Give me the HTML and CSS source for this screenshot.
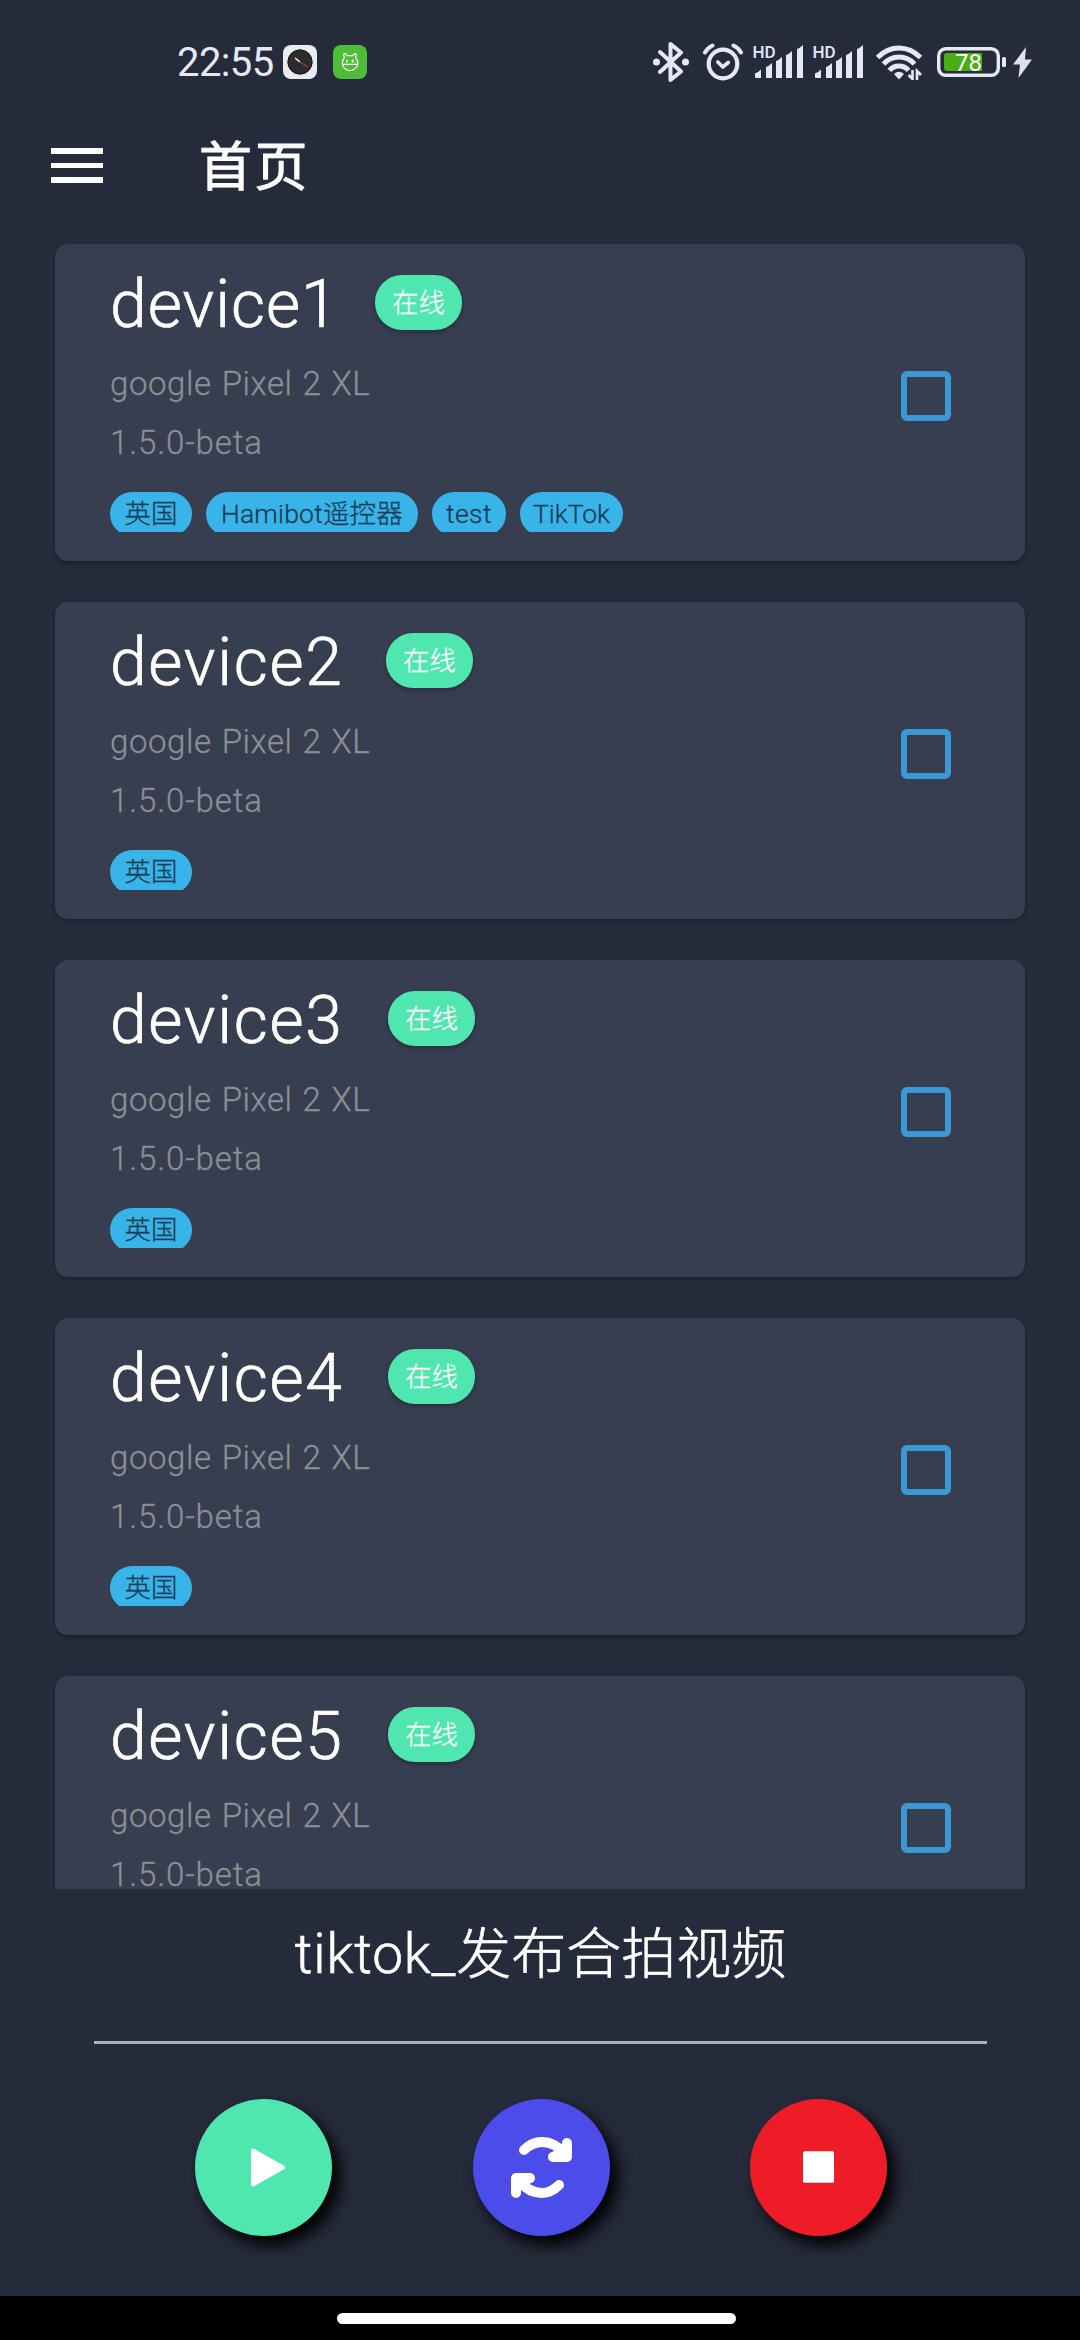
FILE: index.html
```html
<!DOCTYPE html>
<html lang="zh">
<head>
<meta charset="utf-8">
<title>首页</title>
<link rel="stylesheet" href="styles.css">
</head>
<body>
<div class="screen">
  <div class="status">
    <span class="time">22:55</span>
    <svg class="app-icon" width="34" height="34" viewBox="0 0 34 34"><rect width="34" height="34" rx="8" fill="#e9edf0"/><circle cx="17" cy="17" r="12.200" fill="#2b2b2d" stroke="#151515" stroke-width="1"/><path d="M12 13l5 4" stroke="#fff" stroke-width="1.600"/><path d="M17 17l8 5" stroke="#a33c4c" stroke-width="1.200"/></svg>
    <svg class="app-icon" width="34" height="34" viewBox="0 0 34 34"><rect width="34" height="34" rx="8" fill="#4fbd39"/><g fill="none" stroke="#fff" stroke-width="1.200"><path d="M11.500 12.300c-1.500-2-.8-3.600.5-3.600s1.600.8 2 1.900h6c.4-1.100.7-1.900 2-1.900s2 1.600.5 3.600c1.500 1.700 2.200 3.600 2.200 5.700a7.700 7.700 0 0 1-15.400 0c0-2.100.7-4 2.200-5.700z"/><path d="M9.300 19.400h15.400M14 14.500v3M18.200 16h3M19.700 14.500v3"/></g></svg>
    <div class="indicators">
      <svg width="36" height="40" viewBox="0 0 36 40"><path d="M7 10l21 19.500-10.500 8.500V2L28 10.500 7 30" fill="none" stroke="#e6e9f1" stroke-width="4" stroke-linejoin="round" stroke-linecap="round"/><circle cx="3.500" cy="20" r="3.500" fill="#e6e9f1"/><circle cx="32.500" cy="20" r="3.500" fill="#e6e9f1"/></svg>
      <svg class="alarm" width="40" height="38" viewBox="0 0 40 38"><g fill="none" stroke="#e6e9f1" stroke-linecap="round" stroke-linejoin="round"><circle cx="20" cy="21" r="14.300" stroke-width="4.200"/><path d="M14.800 19l5 5 5.500-4.500" stroke-width="3.600"/><path d="M2 9.500Q4.500 5 9.500 2.500M30.500 2.500Q35.500 5 38 9.500" stroke-width="4"/></g></svg>
      <svg class="signal" width="52" height="34" viewBox="0 0 52 34"><text x="-.5" y="13" class="hd">HD</text><g fill="#e6e9f1"><path d="M2 32.500v-4q3-1 6-4v8.500H3zM13 33V22q3-1 6-4v15zM23 33V16q3-1 6-4v21zM33 33V10q3-1 6-4v27zM44 33V4q3-1 6-4v33z"/></g></svg>
      <svg class="signal" width="52" height="34" viewBox="0 0 52 34"><text x="-.5" y="13" class="hd">HD</text><g fill="#e6e9f1"><path d="M2 32.500v-4q3-1 6-4v8.500H3zM13 33V22q3-1 6-4v15zM23 33V16q3-1 6-4v21zM33 33V10q3-1 6-4v27zM44 33V4q3-1 6-4v33z"/></g></svg>
      <svg class="wifi" width="47" height="35" viewBox="0 0 47 35"><g fill="none" stroke="#e6e9f1" stroke-width="5"><path d="M1.500 12.500Q11 3 23 3t21.500 9.500M7.500 19Q14 12 23 12t15.500 7M13.500 25.500Q17 21 23 21t9.500 4.500"/></g><path d="M18 29q5-4.500 10 0l-5 5.500z" fill="#e6e9f1"/><path d="M36.500 25v9l-4-4M41 35v-9l4 4" fill="none" stroke="#e6e9f1" stroke-width="2.600"/></svg>
      <svg class="battery" width="70" height="30" viewBox="0 0 70 30"><rect x="1.700" y="1.700" width="59.600" height="26.600" rx="7" fill="none" stroke="#e6e9f1" stroke-width="3.400"/><path d="M7 9q0-3 3-3h35v18H10q-3 0-3-3z" fill="#4bad14"/><rect x="65" y="10" width="4" height="10" rx="1.500" fill="#e6e9f1"/><text x="31.500" y="23.500" class="level">78</text></svg>
      <svg class="bolt" width="19" height="31" viewBox="0 0 19 31"><path d="M13 0L0 17.500h7L5.500 31 19 12.500h-7z" fill="#dfe2ea"/></svg>
    </div>
  </div>
  <header class="appbar">
    <div class="menu"><i></i><i></i><i></i></div>
    <h1>首页</h1>
  </header>
  <main class="list">
    <section class="card"><div class="info">
      <div class="head"><h2 class="n1">device1</h2><span class="online">在线</span></div>
      <p>google Pixel 2 XL</p><p class="version">1.5.0-beta</p>
      <div class="tags"><span class="tag cn">英国</span><span class="tag hami">Hamibot遥控器</span><span class="tag test">test</span><span class="tag tik">TikTok</span></div>
    </div><div class="check"></div></section>
    <section class="card"><div class="info">
      <div class="head"><h2 class="n2">device2</h2><span class="online">在线</span></div>
      <p>google Pixel 2 XL</p><p class="version">1.5.0-beta</p>
      <div class="tags"><span class="tag cn">英国</span></div>
    </div><div class="check"></div></section>
    <section class="card"><div class="info">
      <div class="head"><h2>device3</h2><span class="online">在线</span></div>
      <p>google Pixel 2 XL</p><p class="version">1.5.0-beta</p>
      <div class="tags"><span class="tag cn">英国</span></div>
    </div><div class="check"></div></section>
    <section class="card"><div class="info">
      <div class="head"><h2>device4</h2><span class="online">在线</span></div>
      <p>google Pixel 2 XL</p><p class="version">1.5.0-beta</p>
      <div class="tags"><span class="tag cn">英国</span></div>
    </div><div class="check"></div></section>
    <section class="card"><div class="info">
      <div class="head"><h2>device5</h2><span class="online">在线</span></div>
      <p>google Pixel 2 XL</p><p class="version">1.5.0-beta</p>
      <div class="tags"><span class="tag cn">英国</span></div>
    </div><div class="check"></div></section>
  </main>
  <footer class="panel">
    <div class="script"><span class="latin">tiktok_</span>发布合拍视频</div>
    <div class="actions">
      <div class="btn play"><svg width="137" height="137" viewBox="0 0 137 137"><path d="M58 51.500L88 68.500 58 85.500z" fill="#fff" stroke="#fff" stroke-width="4" stroke-linejoin="round"/></svg></div>
      <div class="btn sync"><svg width="137" height="137" viewBox="0 0 137 137"><g fill="none" stroke="#fff" stroke-width="10" stroke-linecap="round" stroke-linejoin="round"><path d="M51 51Q59 43 69 43q13 0 23 12M94 44v14H80L90 54M86 86Q78 94 69 94q-13 0-23-12M43 94V79H57L47 83"/></g></svg></div>
      <div class="btn stop"><svg width="137" height="137" viewBox="0 0 137 137"><rect x="53" y="52.300" width="31" height="31.500" rx="1.500" fill="#fff"/></svg></div>
    </div>
  </footer>
  <div class="nav"><div class="pill"></div></div>
</div>
</body>
</html>
```

FILE: styles.css
```css
* { box-sizing: border-box; }
body { margin: 0; background: #262b3b; }
h1, h2, p { margin: 0; font-weight: 400; }
svg { display: block; flex: none; }
.screen {
  width: 1080px; height: 2340px; display: flex; flex-direction: column;
  overflow: hidden; background: #262b3b; color: #fff;
  font-family: Roboto, "Noto Sans CJK SC", sans-serif;
}
.status { height: 124px; display: flex; align-items: center; padding-left: 177px; flex: none; color: #e6e9f1; }
.time { font-size: 40px; width: 106px; letter-spacing: -0.6px; white-space: nowrap; padding-top: 1px; }
.app-icon { margin-right: 16px; }
.indicators { display: flex; align-items: center; margin-left: 270px; }
.alarm { margin-left: 14px; }
.signal { margin-left: 10px; overflow: visible; }
.signal + .signal { margin-left: 8px; }
.hd { font: 500 17px Roboto, sans-serif; fill: #e6e9f1; }
.wifi { margin-left: 11px; }
.battery { margin-left: 14px; }
.level { font: 400 24px Roboto, sans-serif; fill: #fff; text-anchor: middle; }
.bolt { margin-left: 6px; }
.appbar { height: 120px; flex: none; display: flex; align-items: flex-start; padding-left: 51px; }
.menu { width: 52px; padding-top: 24px; display: grid; gap: 9px; }
.menu i { height: 5.600px; background: #fff; }
.appbar h1 { margin-left: 96px; font-size: 53px; font-weight: 400; -webkit-text-stroke: .9px #fff; letter-spacing: 2.600px; line-height: 80px; padding-top: 4px; }
.list { height: 1645px; flex: none; overflow: hidden; padding: 0 55px; }
.card {
  height: 317px; margin-bottom: 41px; border-radius: 13px; background: #373e50;
  display: flex; justify-content: space-between; align-items: flex-start;
  padding: 31px 74px 0 55px; box-shadow: 0 2px 5px rgba(0, 0, 0, .3);
}
.head { display: flex; height: 55px; }
.head h2 { width: 278px; font-size: 66px; line-height: 60px; font-weight: 300; letter-spacing: 1.700px; -webkit-text-stroke: .7px #fff; white-space: nowrap; }
.head .n1 { width: 265px; letter-spacing: 1px; }
.head .n2 { width: 276px; }
.online {
  width: 87px; height: 55px; border-radius: 27px; background: #50e6b0; font-size: 26.500px; -webkit-text-stroke: .3px #fff;
  line-height: 56px; text-align: center; font-weight: 300; box-shadow: 0 2px 4px rgba(0, 0, 0, .3);
}
.card p { font-size: 33px; line-height: 40px; margin-top: 34px; color: #8b8f96; font-weight: 300; letter-spacing: .6px; word-spacing: 1.300px; -webkit-text-stroke: .3px #8b8f96; white-space: nowrap; }
.card .version { margin-top: 19px; letter-spacing: .9px; }
.tags { display: flex; gap: 14px; margin-top: 29px; height: 40px; overflow: hidden; }
.tag {
  height: 44px; border-radius: 22px; background: #38b4e8; color: #193c58; font-size: 26.500px; font-weight: 300;
  -webkit-text-stroke: .3px #193c58; line-height: 43px; text-align: center; white-space: nowrap;
}
.cn { width: 82px; }
.hami { width: 212px; letter-spacing: .2px; }
.test { width: 74px; letter-spacing: .5px; }
.tik { width: 103px; }
.check { width: 50px; height: 50px; margin-top: 96px; border: 6px solid #3b98d5; border-radius: 6px; }
.panel { height: 407px; flex: none; padding: 0 93px 0 94px; }
.script {
  height: 154.500px; border-bottom: 3px solid #a9b0c3; font-size: 55px; line-height: 130px;
  text-align: center; font-weight: 300; -webkit-text-stroke: .6px #fff; white-space: nowrap;
}
.latin { letter-spacing: .8px; }
.actions { display: flex; justify-content: space-between; padding: 55.500px 100px 0 101px; }
.btn { width: 137px; height: 137px; border-radius: 50%; box-shadow: 8px 9px 16px #000; }
.play { background: #50e6b0; }
.sync { background: #4c4cea; }
.stop { background: #ed1c27; }
.nav { height: 44px; flex: none; background: #000; display: flex; justify-content: center; padding-top: 17px; }
.pill { width: 399px; height: 11px; border-radius: 6px; background: #fff; margin-right: 7px; }
```
